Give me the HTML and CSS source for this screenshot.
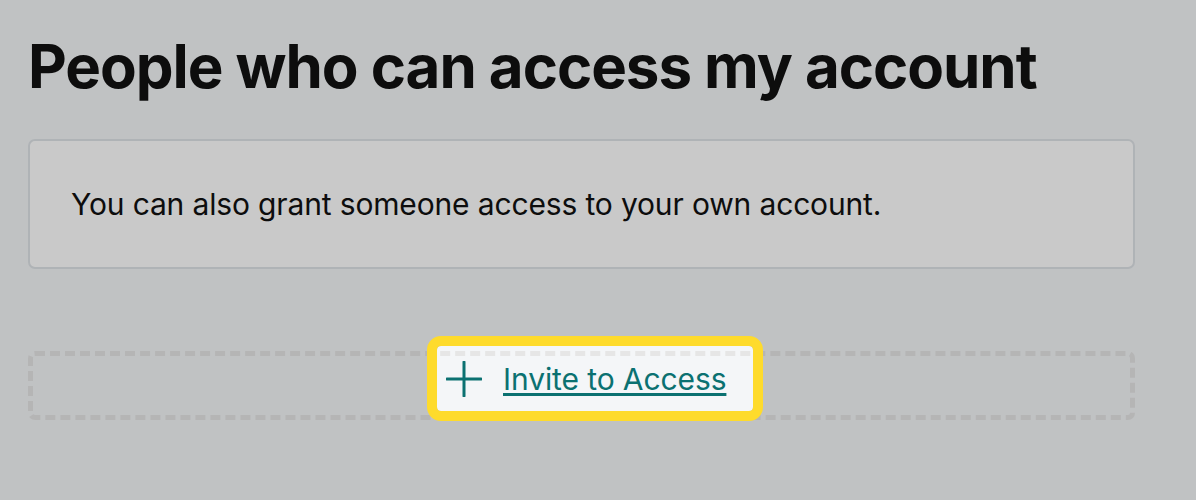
FILE: index.html
```html
<!DOCTYPE html>
<html lang="en">
<head>
    <meta charset="UTF-8">
    <meta name="viewport" content="width=device-width, initial-scale=1.0">
    <title>Account Access</title>
    <link rel="stylesheet" href="styles.css">
</head>
<body>

    <main class="page">
        <h1 class="page-title">People who can access my account</h1>

        <!-- Info card -->
        <div class="notice">
            <p>You can also grant someone access to your own account.</p>
        </div>

        <!-- Empty slot with the highlighted invite button -->
        <div class="invite-slot">
            <a href="#" class="invite-btn">
                <svg class="plus-icon" width="36" height="36" viewBox="0 0 36 36" aria-hidden="true">
                    <path d="M18 1v34M1 18h34" stroke="currentColor" stroke-width="3" stroke-linecap="round" fill="none"/>
                </svg>
                <span class="invite-label">Invite to Access</span>
            </a>
        </div>
    </main>

</body>
</html>
```

FILE: styles.css
```css
html, body {
    margin: 0;
    height: 100%;
    overflow: hidden;
}

body {
    font-family: Inter, "Noto Sans", Arial, sans-serif;
    background-color: #f4f6f8;
    color: #111;
}

.page {
    width: 1107px;
    padding: 0 0 0 28px;
}

.page-title {
    margin: 0;
    padding-top: 29px;
    font-size: 60px;
    line-height: 74px;
    font-weight: 700;
    letter-spacing: -1.05px;
    color: #111;
}

/* Info card */
.notice {
    margin-top: 36px;
    height: 130px;
    background: #fff;
    border: 2px solid #dfe3e7;
    border-radius: 7px;
    display: flex;
    align-items: center;
    padding: 0 41px;
    box-sizing: border-box;
}

.notice p {
    margin: 0;
    font-size: 30px;
    letter-spacing: -0.15px;
    color: #111;
}

/* Invite slot */
.invite-slot {
    margin-top: 82px;
    height: 69px;
    box-sizing: border-box;
    border: 5px dashed #e6e6e6;
    border-radius: 7px;
    display: flex;
    justify-content: center;
    align-items: flex-start;
}

.invite-btn {
    position: relative;
    z-index: 1;
    margin: -10px 0 0 27px;
    width: 316px;
    height: 65px;
    box-sizing: border-box;
    padding-left: 9px;
    display: flex;
    align-items: center;
    gap: 21px;
    color: #0b7171;
    text-decoration: none;
    border-radius: 4px;
    outline: 10px solid #fedb2c;
    box-shadow: 0 0 0 3000px rgba(0, 0, 0, 0.21);
}

.plus-icon {
    flex: none;
}

.invite-label {
    font-size: 30px;
    letter-spacing: -0.1px;
    text-decoration: underline;
    text-decoration-thickness: 3px;
    text-underline-offset: 3px;
}
```
